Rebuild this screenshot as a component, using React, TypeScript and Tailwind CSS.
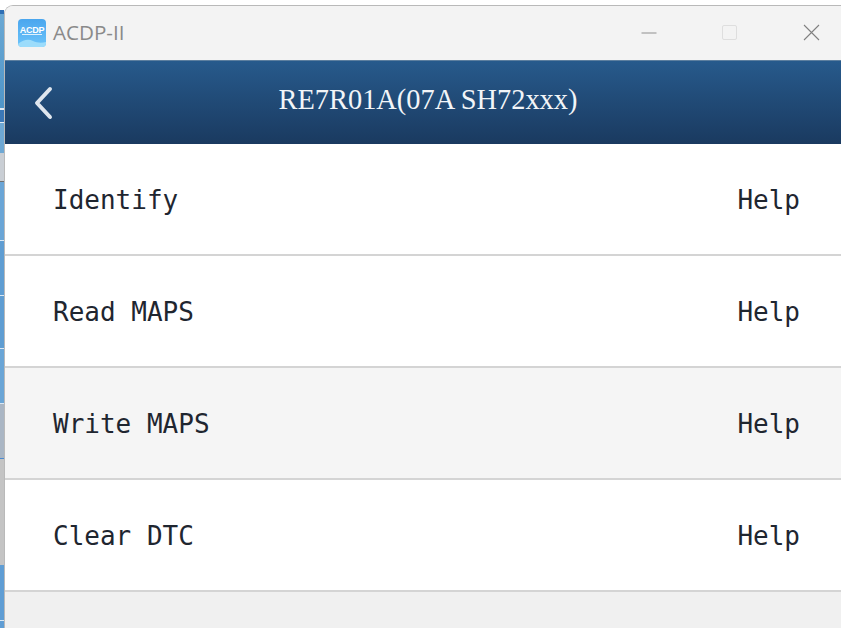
const rows = [
  { label: "Identify", bg: "bg-white" },
  { label: "Read MAPS", bg: "bg-white" },
  { label: "Write MAPS", bg: "bg-[#f5f5f5]" },
  { label: "Clear DTC", bg: "bg-white" },
];

const strip = [
  "h-[5px] bg-white",
  "h-[4px] bg-[#2f6fb5]",
  "h-[94px] bg-gradient-to-b from-[#6aa8d4] to-[#4f95c8]",
  "h-[2px] bg-[#dfe9f3]",
  "h-[12px] bg-[#3b78b8]",
  "h-px bg-[#e4edf5]",
  "h-[30px] bg-[#6ea8d4]",
  "h-[28px] bg-[#c9ced4]",
  "h-px bg-[#707070]",
  "h-[58px] bg-[#6aa5d6]",
  "h-px bg-[#dbe8f3]",
  "h-[54px] bg-[#5f9dd2]",
  "h-px bg-[#dbe8f3]",
  "h-[52px] bg-[#5f9dd2]",
  "h-px bg-[#dbe8f3]",
  "h-[54px] bg-[#6aa5d6]",
  "h-px bg-[#dbe8f3]",
  "h-[54px] bg-[#aab6c4]",
  "h-px bg-[#4a8ad0]",
  "h-[106px] bg-[#c4c4c4]",
  "h-[55px] bg-[#5f9dd4]",
  "h-px bg-[#dbe8f3]",
  "flex-1 bg-[#5f9dd4]",
];

function Logo() {
  return (
    <div className="relative w-[28px] h-[28px] rounded-[4px] overflow-hidden bg-gradient-to-b from-[#4aa6ee] to-[#6cc4fa] flex justify-center">
      <span
        className="text-white text-[9px] font-bold leading-none mt-[7px] tracking-[-0.3px]"
        style={{ fontFamily: '"Liberation Sans", sans-serif' }}
      >
        ACDP
      </span>
      <div className="absolute left-[4px] right-[4px] top-[15px] h-px bg-white/80" />
      <svg className="absolute left-0 bottom-0" width="28" height="9" viewBox="0 0 28 9">
        <path d="M0 6 C6 1 11 1 15 3 C19 5 24 5 28 4 L28 9 L0 9 Z" fill="#9cdcfb" />
      </svg>
    </div>
  );
}

export default function App() {
  return (
    <div className="w-[841px] h-[628px] overflow-hidden flex flex-col bg-white">
      <div className="h-[5px] bg-white shrink-0" />
      <div className="flex-1 flex min-h-0">
        <div className="w-[4px] shrink-0 flex flex-col">
          {strip.map((c, i) => (
            <div key={i} className={`${c} shrink-0`} />
          ))}
        </div>
        <div className="flex-1 flex flex-col min-w-0 rounded-tl-[9px] overflow-hidden border-t border-l border-[#b9b9b9] bg-[#f0f0f0]">
          <div className="h-[54px] shrink-0 bg-[#f3f3f3] flex items-center pl-[13px] pb-[1px] relative">
            <Logo />
            <span
              className="ml-[7px] text-[20.6px] leading-none text-[#8a8a8a]"
              style={{ fontFamily: '"Open Sans", sans-serif' }}
            >
              ACDP-II
            </span>
            <div className="ml-auto flex items-center">
              <svg width="16" height="16" viewBox="0 0 16 16" className="mr-[65px]">
                <path d="M0.5 8 H15.5" stroke="#8f8f8f" strokeWidth="1" />
              </svg>
              <div className="w-[15px] h-[15px] rounded-[2px] border border-[#dedede] mr-[66px]" />
              <svg width="17" height="17" viewBox="0 0 17 17" className="mr-[21px]">
                <path d="M1 1 L16 16 M16 1 L1 16" stroke="#808080" strokeWidth="1.1" />
              </svg>
            </div>
          </div>
          <div className="h-[84px] shrink-0 bg-gradient-to-b from-[#275a8c] to-[#1a3a60] border-t border-[#5d7f9f] flex items-center relative">
            <svg width="24" height="34" viewBox="0 0 24 34" className="absolute left-[26px] top-[25px]">
              <path d="M19 3 L6 17 L19 31" fill="none" stroke="#dfe6ee" strokeWidth="4" strokeLinecap="round" strokeLinejoin="round" />
            </svg>
            <div
              className="w-full text-center text-[#f2f5f8] text-[28.4px] leading-none pb-[5px] pl-[10px]"
              style={{ fontFamily: '"Liberation Serif", serif' }}
            >
              RE7R01A(07A SH72xxx)
            </div>
          </div>
          {rows.map((r) => (
            <div
              key={r.label}
              className={`h-[112px] shrink-0 ${r.bg} border-b-2 border-[#d4d4d4] flex items-center justify-between pl-[48px] pr-[41px] pt-[2px] text-[26px] leading-none text-[#1f2630]`}
              style={{ fontFamily: '"DejaVu Sans Mono", monospace' }}
            >
              <span>{r.label}</span>
              <span>Help</span>
            </div>
          ))}
          <div className="flex-1 bg-[#f0f0f0]" />
        </div>
      </div>
    </div>
  );
}
